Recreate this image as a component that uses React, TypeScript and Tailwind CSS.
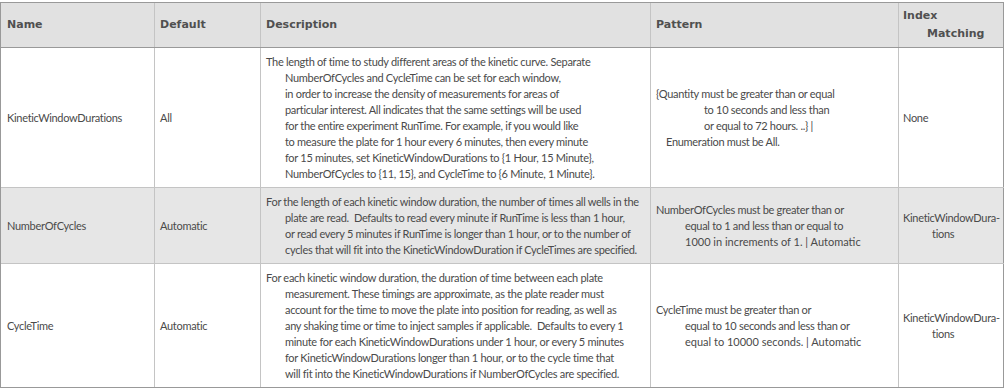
type Line = { text: string; indent: string; wide?: boolean }

type Row = {
  name: string
  def: string
  desc: string[]
  pattern: Line[]
  index: Line[]
  height: string
  shaded?: boolean
  last?: boolean
}

const rows: Row[] = [
  {
    name: 'KineticWindowDurations',
    def: 'All',
    desc: [
      'The length of time to study different areas of the kinetic curve. Separate',
      'NumberOfCycles and CycleTime can be set for each window,',
      'in order to increase the density of measurements for areas of',
      'particular interest. All indicates that the same settings will be used',
      'for the entire experiment RunTime. For example, if you would like',
      'to measure the plate for 1 hour every 6 minutes, then every minute',
      'for 15 minutes, set KineticWindowDurations to {1 Hour, 15 Minute},',
      'NumberOfCycles to {11, 15}, and CycleTime to {6 Minute, 1 Minute}.',
    ],
    pattern: [
      { text: '{Quantity must be greater than or equal', indent: 'pl-0' },
      { text: 'to 10 seconds and less than', indent: 'pl-[48px]' },
      { text: 'or equal to 72 hours. ..} |', indent: 'pl-[48px]' },
      { text: 'Enumeration must be All.', indent: 'pl-[10px]' },
    ],
    index: [{ text: 'None', indent: 'pl-0' }],
    height: 'h-[140px]',
  },
  {
    name: 'NumberOfCycles',
    def: 'Automatic',
    desc: [
      'For the length of each kinetic window duration, the number of times all wells in the',
      'plate are read.  Defaults to read every minute if RunTime is less than 1 hour,',
      'or read every 5 minutes if RunTime is longer than 1 hour, or to the number of',
      'cycles that will fit into the KineticWindowDuration if CycleTimes are specified.',
    ],
    pattern: [
      { text: 'NumberOfCycles must be greater than or', indent: 'pl-0' },
      { text: 'equal to 1 and less than or equal to', indent: 'pl-[29px]' },
      { text: '1000 in increments of 1. | Automatic', indent: 'pl-[29px]', wide: true },
    ],
    index: [
      { text: 'KineticWindowDura-', indent: 'pl-0' },
      { text: 'tions', indent: 'pl-[29px]' },
    ],
    height: 'h-[76px]',
    shaded: true,
  },
  {
    name: 'CycleTime',
    def: 'Automatic',
    desc: [
      'For each kinetic window duration, the duration of time between each plate',
      'measurement. These timings are approximate, as the plate reader must',
      'account for the time to move the plate into position for reading, as well as',
      'any shaking time or time to inject samples if applicable.  Defaults to every 1',
      'minute for each KineticWindowDurations under 1 hour, or every 5 minutes',
      'for KineticWindowDurations longer than 1 hour, or to the cycle time that',
      'will fit into the KineticWindowDurations if NumberOfCycles are specified.',
    ],
    pattern: [
      { text: 'CycleTime must be greater than or', indent: 'pl-0' },
      { text: 'equal to 10 seconds and less than or', indent: 'pl-[29px]' },
      { text: 'equal to 10000 seconds. | Automatic', indent: 'pl-[29px]', wide: true },
    ],
    index: [
      { text: 'KineticWindowDura-', indent: 'pl-0' },
      { text: 'tions', indent: 'pl-[29px]' },
    ],
    height: 'h-[124px]',
    last: true,
  },
]

function Lines({ items }: { items: Line[] }) {
  return (
    <div>
      {items.map((l, i) => (
        <div key={i} className={`${l.indent} whitespace-pre ${l.wide ? 'tracking-normal' : ''}`}>
          {l.text}
        </div>
      ))}
    </div>
  )
}

export default function App() {
  const head = 'flex items-center px-[5px] border-r border-[#c4c4c4]'
  return (
    <div className="pt-[2px] bg-white w-[1004px] h-[389px] overflow-hidden">
      <div
        className="border-l border-t border-[#999] text-[#4a4a4a] text-[11px] leading-[16px] tracking-[-0.3px]"
        style={{ fontFamily: 'Lato, "Liberation Sans", sans-serif' }}
      >
        {/* header */}
        <div
          className="grid grid-cols-[154px_106px_390px_248px_105px] h-[45px] bg-[#e1e1e1] border-b border-[#999] text-[#505050] font-bold tracking-normal"
          style={{ fontFamily: '"DejaVu Sans", sans-serif' }}
        >
          <div className={`${head} pl-[6px]`}>Name</div>
          <div className={head}>Default</div>
          <div className={head}>Description</div>
          <div className={head}>Pattern</div>
          <div className="flex items-center px-[4px] border-r border-[#999] leading-[18px]">
            <div>
              <div>Index</div>
              <div className="pl-[24px]">Matching</div>
            </div>
          </div>
        </div>

        {rows.map((r) => (
          <div
            key={r.name}
            className={`grid grid-cols-[154px_106px_390px_248px_105px] ${r.height} border-b ${
              r.last ? 'border-[#999]' : 'border-[#c4c4c4]'
            } ${r.shaded ? 'bg-[#e6e6e6]' : 'bg-white'}`}
          >
            <div className="flex items-center pl-[6px] pr-[5px] border-r border-[#c4c4c4]">{r.name}</div>
            <div className="flex items-center px-[5px] border-r border-[#c4c4c4]">{r.def}</div>
            <div className="flex items-center px-[5px] border-r border-[#c4c4c4]">
              <div>
                {r.desc.map((d, i) => (
                  <div key={i} className={`whitespace-pre ${i === 0 ? '' : 'pl-[19px]'}`}>
                    {d}
                  </div>
                ))}
              </div>
            </div>
            <div className="flex items-center px-[5px] border-r border-[#c4c4c4]">
              <Lines items={r.pattern} />
            </div>
            <div className="flex items-center px-[4px] border-r border-[#999]">
              <Lines items={r.index} />
            </div>
          </div>
        ))}
      </div>
    </div>
  )
}
